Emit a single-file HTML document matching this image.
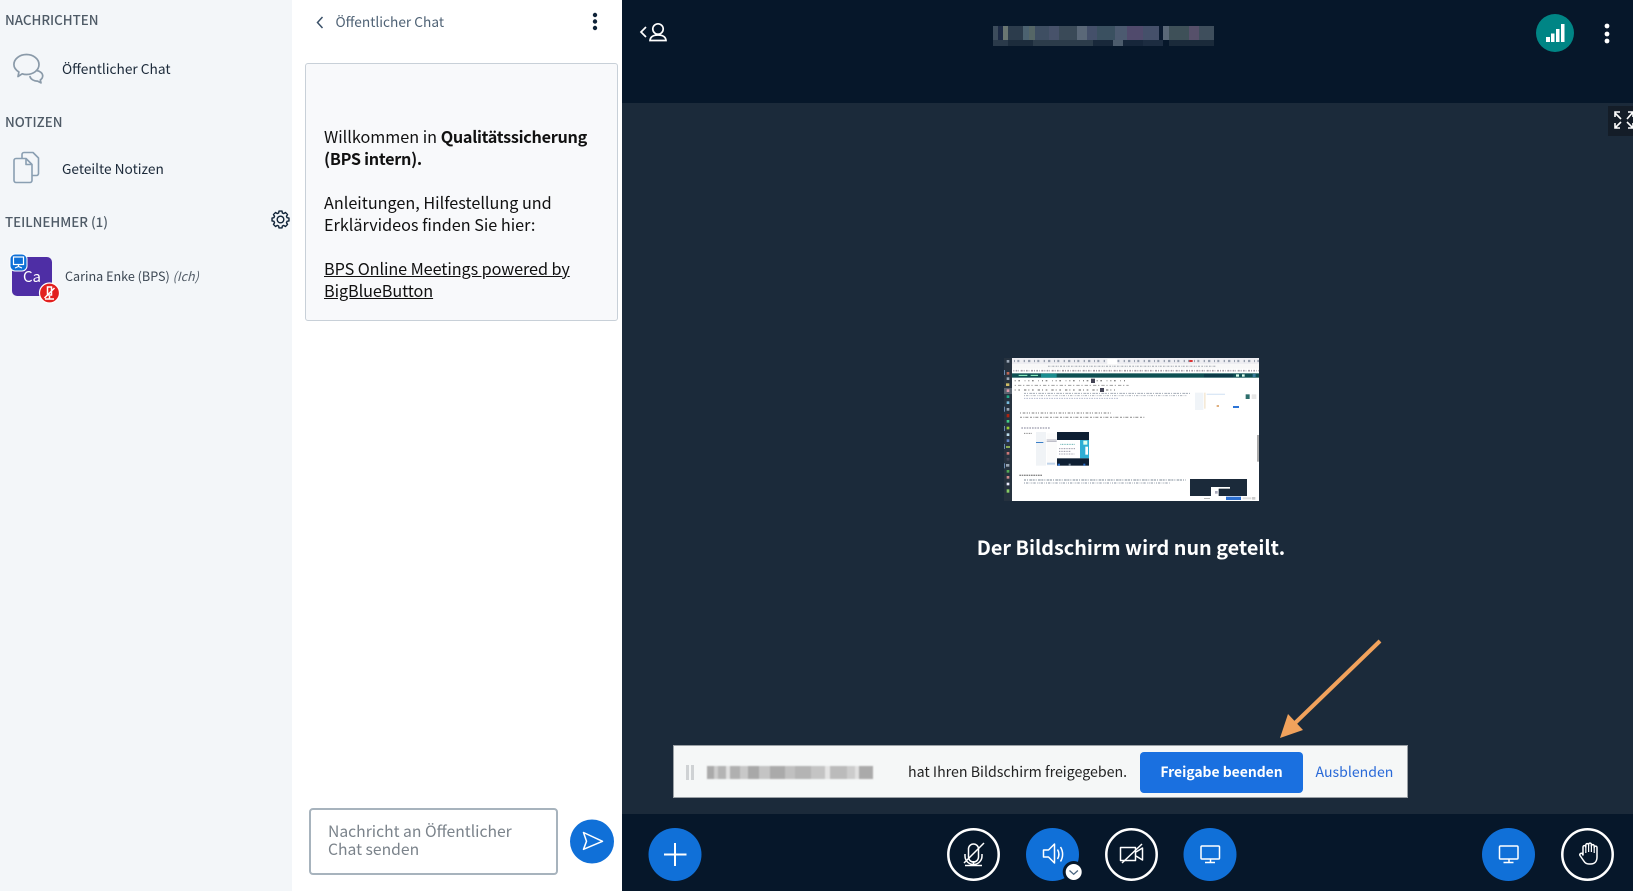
<!DOCTYPE html>
<html lang="de">
<head>
<meta charset="utf-8">
<title>Online Meeting</title>
<style>
html,body{margin:0;padding:0;width:1633px;height:891px;overflow:hidden;background:#1b2a3a;font-family:"Noto Sans CJK JP","Liberation Sans",sans-serif;}
*{box-sizing:border-box}
.a{position:absolute;white-space:nowrap}
#side{position:absolute;left:0;top:0;width:292px;height:891px;background:#f3f6f9}
#chat{position:absolute;left:292px;top:0;width:330px;height:891px;background:#fff}
#head{position:absolute;left:622px;top:0;width:1011px;height:103px;background:#06172a}
#bar{position:absolute;left:622px;top:814px;width:1011px;height:77px;background:#06172a}
.lab{font-size:13.3px;line-height:20px;color:#4e5a66;font-weight:500}
.it{font-size:13.7px;line-height:20px;color:#1c2a3a}
#msg{position:absolute;left:305px;top:63px;width:313px;height:258px;background:#f8f9fb;border:1px solid #c8d0d8;border-radius:3px}
.m{left:324px;font-size:16.2px;line-height:22px;color:#111}
.m b{font-weight:700;letter-spacing:-.28px}
#inp{position:absolute;left:309px;top:808px;width:249px;height:67px;border:2px solid #a7b3bd;border-radius:4px;background:#fff}
.ph{left:328px;font-size:15.7px;line-height:18px;color:#7b838b}
#nt{position:absolute;left:673px;top:745px;width:735px;height:53px;background:#f5f7f7;border:1px solid #9aa0a5}
#btn{position:absolute;left:1140px;top:752px;width:163px;height:41px;background:#1a70e0;border-radius:4px;color:#fff;font-size:13.9px;font-weight:700;line-height:41px;text-align:center}
</style>
</head>
<body>
<div id="side"></div>
<div id="chat"></div>
<div id="head"></div>
<div id="bar"></div>

<div class="a lab" style="left:5px;top:10px">NACHRICHTEN</div>
<div class="a it" style="left:62px;top:58px">Öffentlicher Chat</div>
<div class="a lab" style="left:5px;top:112px">NOTIZEN</div>
<div class="a it" style="left:62px;top:158px">Geteilte Notizen</div>
<div class="a lab" style="left:5px;top:212px">TEILNEHMER (1)</div>
<div class="a" style="left:12px;top:257px;width:40px;height:39px;background:#4e2ea5;border-radius:5px;color:#fff;font-size:15px;line-height:39px;text-align:center">Ca</div>
<div class="a" style="left:65px;top:266px;font-size:12.6px;line-height:20px;color:#3b4652">Carina Enke (BPS) <i style="color:#555f6a">(Ich)</i></div>

<div class="a" style="left:335.500px;top:11px;font-size:13.7px;line-height:20px;color:#4f6275">Öffentlicher Chat</div>
<div id="msg"></div>
<div class="a m" style="top:125px">Willkommen in <b>Qualitätssicherung</b></div>
<div class="a m" style="top:147px"><b>(BPS intern).</b></div>
<div class="a m" style="top:191px">Anleitungen, Hilfestellung und</div>
<div class="a m" style="top:213px">Erklärvideos finden Sie hier:</div>
<div class="a m" style="top:257px;text-decoration:underline;letter-spacing:-.07px">BPS Online Meetings powered by</div>
<div class="a m" style="top:279px;text-decoration:underline;letter-spacing:-.07px">BigBlueButton</div>
<div id="inp"></div>
<div class="a ph" style="top:822px">Nachricht an Öffentlicher</div>
<div class="a ph" style="top:840px">Chat senden</div>

<!-- blurred title -->
<div class="a" style="left:993px;top:26px;width:221px;height:14px;background:linear-gradient(90deg,#3c4c5c 0 5px,#1c2a44 5px 10px,#6a7672 10px 15px,#2c3c4c 15px 30px,#4c6270 30px 36px,#566 36px 42px,#3e4e62 42px 56px,#47526a 56px 66px,#3a4a58 66px 84px,#5a6878 84px 94px,#44506a 94px 104px,#3a5060 104px 122px,#4c5a70 122px 134px,#504a6c 134px 150px,#45506a 150px 166px,#0a1a30 166px 170px,#5a6878 170px 176px,#3e5058 176px 196px,#56506a 196px 206px,#3e4e5c 206px 221px)"></div>
<div class="a" style="left:993px;top:40px;width:221px;height:6px;background:linear-gradient(90deg,#2a3a4a 0 15px,#1c2c3c 15px 40px,#2c3c4a 40px 100px,#18283a 100px 120px,#4c5c6c 120px 130px,#16263a 130px 150px,#1c2c40 150px 170px,#06172a 170px 176px,#1a2a3a 176px 221px)"></div>

<!-- center message -->
<div class="a" style="left:900px;top:532px;width:462px;text-align:center;font-size:19.800px;line-height:30px;font-weight:700;color:#fff">Der Bildschirm wird nun geteilt.</div>

<!-- notification -->
<div id="nt"></div>
<div class="a" style="left:686px;top:765px;width:3px;height:15px;background:#cfd2d4"></div>
<div class="a" style="left:691px;top:765px;width:3px;height:15px;background:#cfd2d4"></div>
<div class="a" style="left:707px;top:766px;width:166px;height:13px;filter:blur(.8px);background:linear-gradient(90deg,#aaa 0 7px,#ccc 7px 11px,#b4b4b4 11px 19px,#e0e0e0 19px 23px,#b0b0b0 23px 33px,#c8c8c8 33px 41px,#a8a8a8 41px 52px,#c4c4c4 52px 63px,#aaa 63px 78px,#c0c0c0 78px 88px,#b4b4b4 88px 104px,#c4c4c4 104px 118px,#e4e4e4 118px 123px,#bbb 123px 140px,#ccc 140px 148px,#e0e0e0 148px 152px,#aaa 152px 166px)"></div>
<div class="a" style="left:908px;top:761px;font-size:14.2px;line-height:22px;color:#222">hat Ihren Bildschirm freigegeben.</div>
<div id="btn">Freigabe beenden</div>
<div class="a" style="left:1315.500px;top:761px;font-size:14.1px;line-height:22px;color:#2a6ad8">Ausblenden</div>

<!-- all icons & thumbnail -->
<svg class="a" style="left:0;top:0" width="1633" height="891" viewBox="0 0 1633 891" xmlns="http://www.w3.org/2000/svg">
  <!-- chat bubbles -->
  <g fill="none" stroke="#8a9aa9" stroke-width="1.700" stroke-linejoin="round" stroke-linecap="round">
    <path d="M26.500 54.500c6.800 0 12.500 4.400 12.500 10 0 5.700-5.700 10-12.500 10-1.500 0-3-.2-4.300-.7l-4.200 2.700.9-4.500c-3-1.900-5-4.500-5-7.500 0-5.600 5.800-10 12.600-10z"/>
    <path d="M36.500 70.500c3.500.5 6.200 2.600 6.200 5.400 0 1.700-1 3.100-2.400 4.100l.7 2.900-3.400-1.800c-3.300.2-6.900-1.800-7.600-4.500"/>
  </g>
  <!-- notes -->
  <g fill="none" stroke="#8a9fb2" stroke-width="1.600" stroke-linejoin="round">
    <path d="M14 160.500a2 2 0 0 1 2-2h10l6 6v16a2 2 0 0 1-2 2H16a2 2 0 0 1-2-2z"/>
    <path d="M26 158.500v6h6"/>
    <path d="M22 158v-3.500a2 2 0 0 1 2-2h9l5.500 5.500v15.500a2 2 0 0 1-2 2H32"/>
  </g>
  <!-- gear -->
  <g transform="translate(280.500 219.500)" fill="none" stroke="#0f2338" stroke-width="1.400" stroke-linejoin="round">
    <path d="M6.540-1.870L8.470-1.490 8.470 1.490 6.540 1.870 5.950 3.300 7.040 4.940 4.940 7.040 3.300 5.950 1.870 6.540 1.490 8.470-1.490 8.470-1.870 6.540-3.300 5.950-4.940 7.040-7.040 4.940-5.950 3.300-6.540 1.870-8.470 1.490-8.470-1.490-6.540-1.870-5.950-3.300-7.040-4.940-4.940-7.040-3.300-5.950-1.870-6.540-1.490-8.470 1.490-8.470 1.870-6.540 3.300-5.950 4.940-7.040 7.040-4.940 5.950-3.300z"/>
    <circle r="3.300"/>
  </g>
  <!-- presenter badge -->
  <rect x="10" y="254" width="17" height="17" rx="5" fill="#0f70d7" stroke="#fff" stroke-width="1"/>
  <g fill="none" stroke="#fff" stroke-width="1.200"><rect x="13.500" y="257" width="10" height="7.500"/><path d="M18.500 264.500v2M15 268l3.500-1.500L22 268"/></g>
  <!-- red badge -->
  <circle cx="49.500" cy="293" r="10" fill="#e2201f" stroke="#fff" stroke-width="1.200"/>
  <g fill="none" stroke="#fff" stroke-width="1.500"><path d="M47.500 287h4v8h-4zM44.500 298l10-10M45 299h9M49.500 296v3"/></g>

  <!-- chat header -->
  <path d="M322.500 17l-5 5.500 5 5.500" fill="none" stroke="#3a5068" stroke-width="1.500"/>
  <g fill="#0f2338"><circle cx="595" cy="15" r="2.200"/><circle cx="595" cy="21.500" r="2.200"/><circle cx="595" cy="28" r="2.200"/></g>
  <!-- send -->
  <circle cx="592" cy="841.500" r="22" fill="#1070d8"/>
  <path d="M583.500 832.500l19 8.800-19 8 3-8z" fill="none" stroke="#fff" stroke-width="1.500" stroke-linejoin="round"/>

  <!-- header left -->
  <g fill="none" stroke="#fff" stroke-width="1.700">
    <path d="M646 27l-5 5 5 5"/>
    <circle cx="658" cy="29" r="5.200"/>
    <path d="M650 40.500c.3-3.700 3.500-5.500 8-5.500s7.700 1.800 8 5.500z"/>
  </g>
  <!-- connection -->
  <circle cx="1555" cy="33" r="19" fill="#008585"/>
  <g fill="#fff"><rect x="1546" y="37" width="4" height="5"/><rect x="1551" y="33.500" width="3.500" height="8.500"/><rect x="1556" y="29" width="3.500" height="13"/><rect x="1561" y="24" width="3.500" height="18"/></g>
  <g fill="#fff"><circle cx="1607" cy="26" r="2.400"/><circle cx="1607" cy="34" r="2.400"/><circle cx="1607" cy="41" r="2.400"/></g>
  <!-- fullscreen -->
  <rect x="1608" y="106" width="25" height="30" fill="#141d28"/>
  <g fill="none" stroke="#fff" stroke-width="1.600">
    <path d="M1615 113l6 6M1615 117v-5h5M1633 112l-6 7M1628 112h5v5M1621 122l-6 6M1615 123v5h5M1627 122l6 6M1633 123v5h-5"/>
  </g>

  <!-- thumbnail -->
  <g transform="translate(1000 350) scale(.33333)">
    <rect x="12" y="24" width="765" height="429" fill="#fff"/>
    <rect x="12" y="24" width="24" height="429" fill="#26323f"/>
    <g fill="#9aa6b4">
      <rect x="20" y="30" width="8" height="8"/><rect x="20" y="66" width="8" height="8" fill="#b65"/><rect x="20" y="82" width="8" height="8"/><rect x="18" y="100" width="10" height="8" fill="#cb6"/>
      <rect x="12" y="114" width="24" height="18" fill="#59636f"/><rect x="20" y="118" width="8" height="8" fill="#d9a"/><rect x="20" y="136" width="8" height="8" fill="#2a8"/><rect x="20" y="154" width="8" height="8" fill="#7bd"/><rect x="20" y="174" width="8" height="8"/><rect x="20" y="192" width="8" height="10" fill="#a21"/><rect x="20" y="210" width="8" height="8" fill="#4c8"/><rect x="20" y="230" width="8" height="8" fill="#9c3"/><rect x="20" y="250" width="8" height="8" fill="#bde"/><rect x="20" y="268" width="8" height="8" fill="#68c"/><rect x="18" y="288" width="12" height="6" fill="#8a5"/><rect x="20" y="306" width="8" height="8" fill="#c77"/><rect x="20" y="324" width="8" height="8" fill="#445"/><rect x="18" y="342" width="10" height="8"/><rect x="20" y="360" width="8" height="8" fill="#5a5"/><rect x="20" y="378" width="8" height="8" fill="#c88"/><rect x="20" y="398" width="8" height="8" fill="#eef"/><rect x="20" y="418" width="8" height="10" fill="#8c6"/>
      <rect x="12" y="60" width="3" height="15" fill="#6a8ab0"/><rect x="12" y="170" width="3" height="15" fill="#6a8ab0"/><rect x="12" y="228" width="3" height="15" fill="#6a8ab0"/><rect x="12" y="282" width="3" height="15" fill="#6a8ab0"/><rect x="12" y="340" width="3" height="15" fill="#6a8ab0"/>
    </g>
    <rect x="36" y="24" width="741" height="18" fill="#eeeef2"/>
    <path d="M42 33H777" stroke="#98a0ae" stroke-width="7" stroke-dasharray="3 7 6 13 4 9 7 11" fill="none"/>
    <rect x="322" y="27" width="30" height="15" fill="#fff"/>
    <rect x="568" y="30" width="10" height="6" fill="#d33"/>
    <rect x="36" y="42" width="741" height="14" fill="#f8f8f8"/>
    <path d="M144 49H650" stroke="#b8bcc2" stroke-width="4" stroke-dasharray="5 3 2 3 6 4" fill="none"/>
    <path d="M40 62H777" stroke="#a69ca6" stroke-width="5" stroke-dasharray="3 4 5 3 2 5 6 3" fill="none"/>
    <rect x="36" y="70" width="741" height="13" fill="#0e4f52"/>
    <rect x="123" y="71" width="47" height="12" fill="#1b8d8f"/>
    <rect x="612" y="72" width="88" height="10" fill="#0c3a48"/>
    <rect x="708" y="73" width="9" height="7" fill="#dfe"/><rect x="726" y="73" width="8" height="7" fill="#dfe"/><rect x="758" y="72" width="9" height="9" fill="#3a7a9a"/>
    <path d="M56 76h26M92 76h22" stroke="#9fc" stroke-width="3" fill="none"/>
    <path d="M44 92H380" stroke="#888" stroke-width="4" stroke-dasharray="3 8 5 14 2 9" fill="none"/>
    <rect x="273" y="86" width="12" height="13" fill="#445"/>
    <path d="M44 106H386" stroke="#a0a0a0" stroke-width="3" stroke-dasharray="4 6 10 5" fill="none"/>
    <path d="M44 120H345" stroke="#888" stroke-width="4" stroke-dasharray="3 8 5 12 7 6" fill="none"/>
    <rect x="300" y="114" width="12" height="12" fill="#445"/>
    <path d="M72 130H570" stroke="#a4acb6" stroke-width="3" stroke-dasharray="6 3 3 4 9 2" fill="none"/>
    <path d="M72 137H560" stroke="#aeb4bc" stroke-width="3" stroke-dasharray="3 3 7 4 2 3" fill="none"/>
    <path d="M72 145H356" stroke="#b4bace" stroke-width="3" stroke-dasharray="4 3 5 3" fill="none"/>
    <rect x="585" y="128" width="25" height="52" fill="#f0f4f8"/>
    <rect x="612" y="128" width="5" height="48" fill="#f5ead8"/>
    <rect x="620" y="131" width="55" height="4" fill="#dbe8f6"/>
    <rect x="650" y="165" width="7" height="6" fill="#e0b080"/>
    <rect x="699" y="168" width="18" height="6" fill="#2c74d6"/>
    <rect x="737" y="133" width="12" height="14" fill="#2d6e6c"/><rect x="755" y="133" width="14" height="14" fill="#e6e6e6"/>
    <path d="M60 189H332" stroke="#999" stroke-width="4" stroke-dasharray="3 5 8 4 4 3" fill="none"/>
    <path d="M60 202H436" stroke="#999" stroke-width="3.500" stroke-dasharray="6 4 3 3 9 5" fill="none"/>
    <path d="M64 234H152" stroke="#99a" stroke-width="4" stroke-dasharray="5 3" fill="none"/>
    <path d="M72 250h25" stroke="#888" stroke-width="3" stroke-dasharray="3 2" fill="none"/>
    <rect x="108" y="246" width="30" height="101" fill="#f0f3f6"/><rect x="108" y="276" width="22" height="3" fill="#3a7fc8"/>
    <rect x="140" y="250" width="31" height="97" fill="#fbfbfb"/><path d="M140 270h30M140 275h30" stroke="#99a" stroke-width="2" fill="none"/><rect x="141" y="338" width="24" height="6" fill="#c0d4ea"/>
    <rect x="171" y="246" width="96" height="101" fill="#fff"/>
    <rect x="171" y="246" width="96" height="24" fill="#0e1f33"/>
    <rect x="240" y="270" width="27" height="55" fill="#2faed4"/>
    <path d="M177 296h50M177 304h36M177 312h46" stroke="#889" stroke-width="2.500" stroke-dasharray="3 2" fill="none"/>
    <path d="M181 283h45" stroke="#5aa" stroke-width="2.500" stroke-dasharray="3 2" fill="none"/>
    <rect x="250" y="272" width="12" height="12" fill="#dfe"/><rect x="256" y="290" width="8" height="24" fill="#fff"/>
    <rect x="171" y="325" width="96" height="22" fill="#0e1f33"/>
    <rect x="173" y="341" width="7" height="6" fill="#2a70d0"/><rect x="250" y="341" width="6" height="6" fill="#2a70d0"/><rect x="206" y="341" width="6" height="6" fill="#789"/>
    <path d="M58 376H128" stroke="#888" stroke-width="4" stroke-dasharray="5 2" fill="none"/>
    <path d="M72 390H558" stroke="#98a2ac" stroke-width="3.500" stroke-dasharray="6 3 3 4 8 2" fill="none"/>
    <path d="M72 399H512" stroke="#a4acb6" stroke-width="3.500" stroke-dasharray="3 3 7 4 2 3" fill="none"/>
    <rect x="570" y="387" width="171" height="51" fill="#1b2a3a"/>
    <rect x="633" y="411" width="57" height="27" fill="#fff"/><rect x="656" y="416" width="34" height="22" fill="#1b2a3a"/>
    <rect x="645" y="423" width="8" height="8" fill="#aab"/>
    <rect x="771" y="255" width="6" height="80" fill="#aaa"/>
    <rect x="678" y="440" width="45" height="10" fill="#2c6fd0"/>
    <rect x="612" y="444" width="18" height="3" fill="#bbb"/><rect x="728" y="442" width="26" height="6" fill="#ddd"/><rect x="756" y="441" width="10" height="8" fill="#ccc"/>
  </g>

  <!-- arrow -->
  <path d="M1380 641L1293 725" stroke="#f1a25c" stroke-width="4" fill="none"/>
  <path d="M1280 738l8-24 15 16z" fill="#f1a25c"/>

  <!-- bottom bar buttons -->
  <circle cx="675" cy="854.500" r="26.500" fill="#1070d8"/>
  <path d="M664 854.500h22.500M675 843v23" stroke="#fff" stroke-width="2" fill="none"/>

  <circle cx="973.500" cy="854.500" r="25.200" fill="none" stroke="#fff" stroke-width="2.500"/>
  <g fill="none" stroke="#fff" stroke-width="1.500">
    <path d="M968.500 849a5 5 0 0 1 10 0v8a5 5 0 0 1-10 0z"/>
    <path d="M965 854v2a8.500 8.500 0 0 0 17 0v-2M973.500 865v-4M965 865.500h17M964 863l20-20"/>
  </g>

  <circle cx="1052.500" cy="854.500" r="26.500" fill="#1070d8"/>
  <g fill="none" stroke="#fff" stroke-width="1.500" stroke-linejoin="round">
    <path d="M1043.500 850h5l6-6v19l-6-6h-5z"/>
    <path d="M1057.500 849.500c1.800 3 1.800 6.500 0 9.500M1060.500 847c2.800 4.500 2.800 10 0 14.500"/>
  </g>
  <circle cx="1073.700" cy="872" r="11" fill="#06172a"/>
  <circle cx="1073.700" cy="872" r="8" fill="#fff"/>
  <path d="M1069.500 870.500l4.200 3.800 4.200-3.800" fill="none" stroke="#4a6580" stroke-width="1.300"/>

  <circle cx="1131.500" cy="854.500" r="25.200" fill="none" stroke="#fff" stroke-width="2.500"/>
  <g fill="none" stroke="#fff" stroke-width="1.500" stroke-linejoin="round">
    <rect x="1120.500" y="847.500" width="15" height="13"/>
    <path d="M1136 852l6.500-4v12l-6.500-4M1122 863l20-19"/>
  </g>

  <circle cx="1210" cy="854.500" r="26.500" fill="#1070d8"/>
  <g fill="none" stroke="#fff" stroke-width="1.500">
    <rect x="1201" y="846" width="18.500" height="13" rx="1"/>
    <path d="M1210.500 859v3M1205 862.500h10"/>
  </g>

  <circle cx="1508.500" cy="854.500" r="26.500" fill="#1070d8"/>
  <g fill="none" stroke="#fff" stroke-width="1.500">
    <rect x="1499.500" y="846" width="18.500" height="13" rx="1"/>
    <path d="M1509 859v3M1503.500 862.500h10"/>
  </g>

  <circle cx="1587.500" cy="854.500" r="25.200" fill="none" stroke="#fff" stroke-width="2.500"/>
  <path d="M1583 855v-8a1.400 1.400 0 0 1 2.800 0v-2a1.400 1.400 0 0 1 2.800 0v-.5a1.400 1.400 0 0 1 2.800 0v1.500a1.400 1.400 0 0 1 2.800 0v1.500a1.400 1.400 0 0 1 2.800 0V857c0 4.500-2.500 7-6.500 7h-1.500c-2.500 0-4-1-5.200-3l-3.800-5.500c-.9-1.500 1.200-3 2.400-1.800z" fill="none" stroke="#fff" stroke-width="1.500" stroke-linejoin="round"/>
  <path d="M1585.800 847v6M1588.600 845v7M1591.400 845v7M1594.200 846v7" stroke="#fff" stroke-width="1.200" fill="none"/>
</svg>
</body>
</html>
